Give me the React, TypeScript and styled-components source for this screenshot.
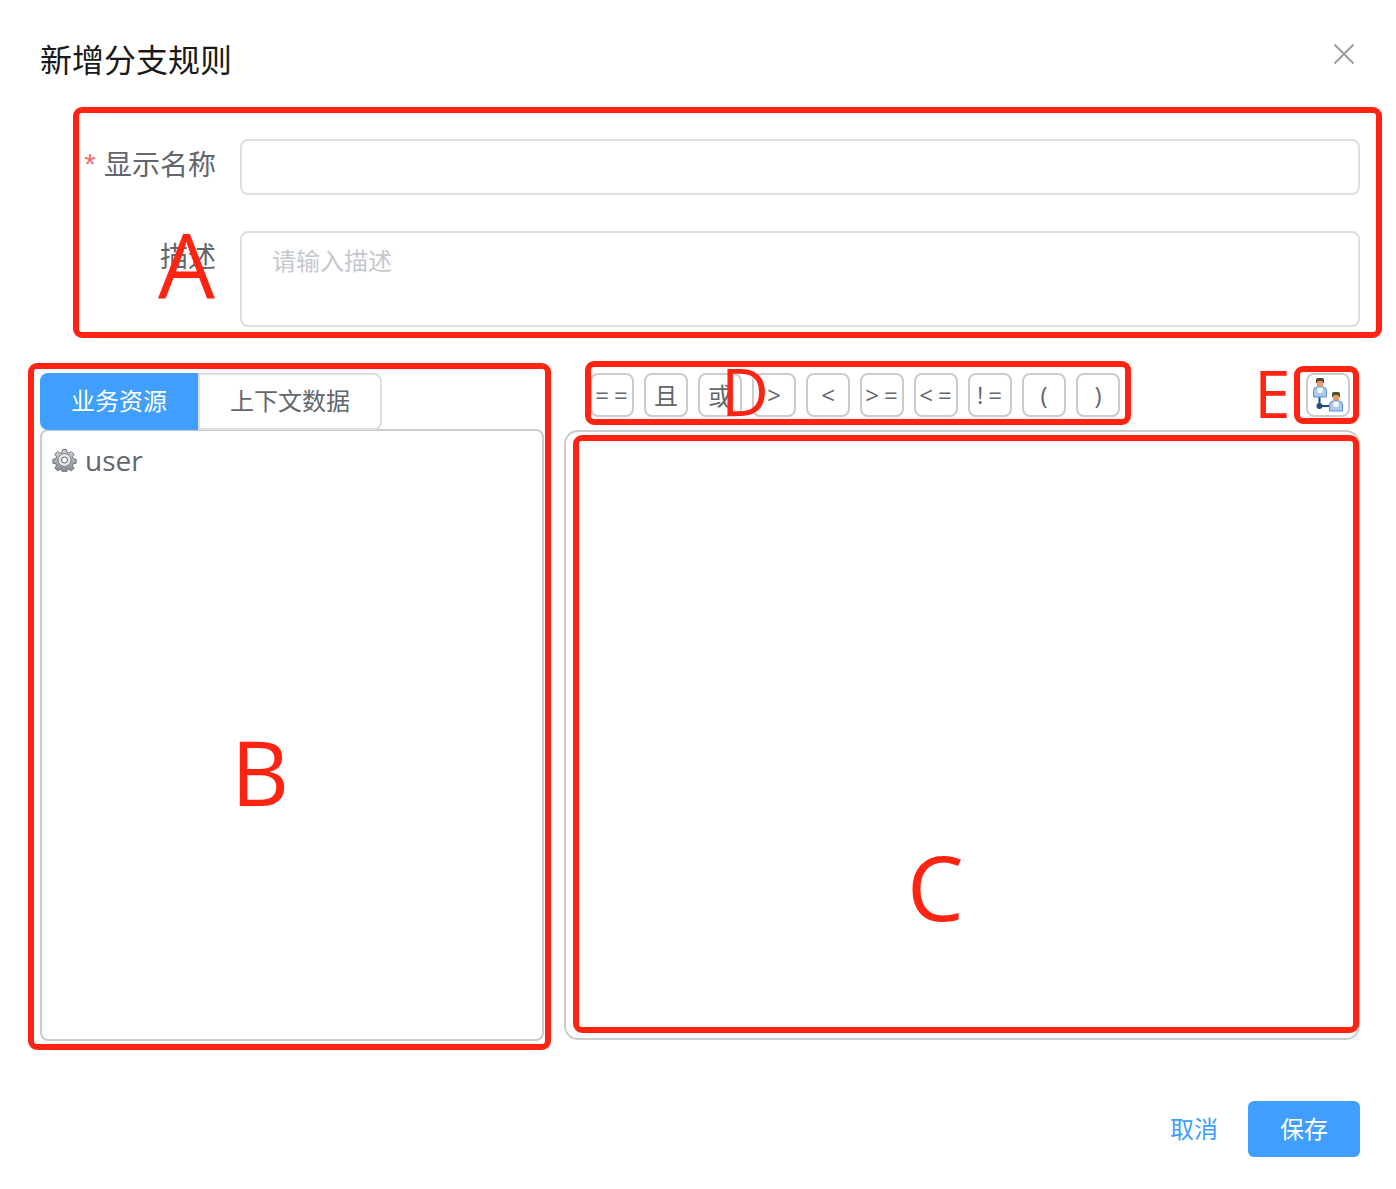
import React from 'react';
import styled, { createGlobalStyle } from 'styled-components';

const GlobalStyle = createGlobalStyle`
  html, body {
    margin: 0;
    padding: 0;
    background: #fff;
    font-family: "Open Sans", "Noto Sans CJK SC", sans-serif;
  }
  * { box-sizing: border-box; }
`;

const Modal = styled.div`
  position: relative;
  width: 1396px;
  height: 1189px;
  padding: 0 36px 0 40px;
  overflow: hidden;
  background: #fff;
`;

const Header = styled.header`
  display: flex;
  align-items: center;
  justify-content: space-between;
  height: 107px;
  padding: 9px 5px 0 0;
`;

const Title = styled.h1`
  margin: 0;
  font-size: 32px;
  font-weight: 400;
  line-height: 40px;
  color: #1a1a1a;
  font-family: "Noto Sans CJK SC", sans-serif;
`;

const CloseButton = styled.button`
  display: flex;
  padding: 0;
  margin-top: -8px;
  border: none;
  background: none;
  color: #999da6;
`;

const Form = styled.form`
  display: flex;
  flex-direction: column;
  gap: 36px;
  margin-top: 32px;
`;

const Row = styled.div`
  display: flex;
  align-items: flex-start;
`;

const Label = styled.label<{ $required?: boolean }>`
  width: 176px;
  padding-top: 4px;
  text-align: right;
  font-size: 28px;
  line-height: 40px;
  color: #62666d;
  font-family: "Noto Sans CJK SC", sans-serif;

  &::before {
    content: ${({ $required }) => ($required ? '"*"' : 'none')};
    margin-right: 8px;
    font-size: 30px;
    line-height: 30px;
    color: #f56c6c;
    vertical-align: 1px;
    font-family: "Liberation Sans", sans-serif;
  }
`;

const Input = styled.div`
  flex: 1;
  margin-left: 24px;
  height: 56px;
  border: 2px solid #dcdee2;
  border-radius: 8px;
  background: #fff;
`;

const TextArea = styled(Input)`
  height: 96px;
  padding: 9px 30px;
  font-size: 24px;
  line-height: 36px;
  color: #c5c8ce;
  font-family: "Noto Sans CJK SC", sans-serif;
`;

const Body = styled.div`
  display: flex;
  align-items: flex-start;
  gap: 21px;
  margin-top: 46px;
`;

const LeftColumn = styled.section`
  width: 504px;
`;

const Tabs = styled.div`
  display: flex;
  height: 57px;
`;

const Tab = styled.div<{ $active?: boolean }>`
  display: flex;
  align-items: center;
  justify-content: center;
  padding-bottom: 4px;
  font-size: 24px;
  font-family: "Noto Sans CJK SC", sans-serif;
  width: ${({ $active }) => ($active ? '158px' : '184px')};
  background: ${({ $active }) => ($active ? '#409eff' : '#fff')};
  color: ${({ $active }) => ($active ? '#fff' : '#62666d')};
  border: ${({ $active }) => ($active ? 'none' : '2px solid #dcdee2')};
  border-radius: ${({ $active }) => ($active ? '8px 0 0 8px' : '0 8px 8px 0')};
`;

const TreePanel = styled.div`
  height: 612px;
  margin-top: -1px;
  padding: 9px 10px;
  border: 2px solid #ccc;
  border-radius: 8px;
`;

const TreeNode = styled.div`
  display: flex;
  align-items: center;
  gap: 8px;
  height: 40px;
  font-size: 28px;
  color: #62666d;
`;

const RightColumn = styled.section`
  flex: 1;
`;

const Toolbar = styled.div`
  display: flex;
  gap: 10px;
  padding: 0 10px 0 25px;
`;

const OpButton = styled.button<{ $wide?: boolean }>`
  display: flex;
  align-items: center;
  justify-content: center;
  flex: none;
  width: 44px;
  height: 44px;
  padding: 0 0 1px ${({ $wide }) => ($wide ? '4px' : '0')};
  border: 2px solid #ccc;
  border-radius: 8px;
  background: #fff;
  color: #62666d;
  font-size: 24px;
  letter-spacing: ${({ $wide }) => ($wide ? '5px' : '0')};
  font-family: "Open Sans", "Noto Sans CJK SC", sans-serif;
`;

const RelationButton = styled(OpButton)`
  margin-left: auto;
`;

const ExpressionPanel = styled.div`
  height: 610px;
  margin-top: 13px;
  margin-left: -1px;
  border: 2px solid #ccc;
  border-radius: 14px;
`;

const Footer = styled.footer`
  display: flex;
  justify-content: flex-end;
  align-items: center;
  gap: 30px;
  margin-top: 60px;
`;

const TextButton = styled.button`
  padding: 0 0 4px;
  border: none;
  background: none;
  color: #409eff;
  font-size: 24px;
  font-family: "Noto Sans CJK SC", sans-serif;
`;

const PrimaryButton = styled.button`
  width: 112px;
  height: 56px;
  padding: 0 0 4px;
  border: none;
  border-radius: 6px;
  background: #409eff;
  color: #fff;
  font-size: 24px;
  font-family: "Noto Sans CJK SC", sans-serif;
`;

// red review marks that were drawn over the screenshot
const Mark = styled.div<{ $x: number; $y: number; $w: number; $h: number }>`
  position: absolute;
  left: ${({ $x }) => $x}px;
  top: ${({ $y }) => $y}px;
  width: ${({ $w }) => $w}px;
  height: ${({ $h }) => $h}px;
  border: 6px solid #ff2312;
  border-radius: 9px;
  pointer-events: none;
`;

const MarkLetter = styled.span<{ $x: number; $y: number; $small?: boolean }>`
  position: absolute;
  left: ${({ $x }) => $x}px;
  top: ${({ $y }) => $y}px;
  font-size: ${({ $small }) => ($small ? '66px' : '90px')};
  line-height: ${({ $small }) => ($small ? '66px' : '90px')};
  color: #ff2312;
  font-family: "Open Sans", sans-serif;
  pointer-events: none;
`;

const CloseIcon = () => (
  <svg width="22" height="22" viewBox="0 0 22 22" fill="none" stroke="currentColor" strokeWidth="2">
    <path d="M1.5 1.5l19 19M20.500 1.500l-19 19" />
  </svg>
);

const GearIcon = () => (
  <svg width="25" height="24" viewBox="0 0 24 24">
    <defs>
      <linearGradient id="gear" x1="0" y1="0" x2="0" y2="1">
        <stop offset="0" stopColor="#cfd4d9" />
        <stop offset="1" stopColor="#7f868c" />
      </linearGradient>
    </defs>
    <path
      fill="url(#gear)"
      stroke="#666c72"
      strokeWidth="1"
      d="M10 1h4l.6 3 2.100.9 2.600-1.700 2.800 2.800-1.700 2.600.9 2.100 3 .6v4l-3 .6-.9 2.100 1.700 2.600-2.800 2.800-2.600-1.700-2.100.9-.6 3h-4l-.6-3-2.100-.9-2.600 1.700-2.800-2.800 1.700-2.600-.9-2.100-3-.6v-4l3-.6.9-2.100-1.700-2.600 2.800-2.800 2.600 1.700 2.100-.9z"
      transform="translate(.6 .6) scale(.95)"
    />
    <circle cx="12" cy="12" r="6.500" fill="#e4e7ea" stroke="#7b8187" />
    <circle cx="12" cy="12" r="3" fill="#fff" stroke="#5e646a" />
  </svg>
);

const PersonGlyph = ({ x, y }: { x: number; y: number }) => (
  <g transform={`translate(${x} ${y})`}>
    <path d="M3 5V2q0-2 2-2h4q2 0 2 2v3z" fill="#4d4c30" />
    <rect x="4" y="3" width="6" height="6" rx="1.500" fill="#e89a64" />
    <path d="M.5 19v-6q0-4 3.500-4h6q3.500 0 3.500 4v6z" fill="#a9c8ea" stroke="#5f93cf" />
    <path d="M4.500 9.500h5v5.500h-5z" fill="#f4f8fc" />
  </g>
);

const RelationIcon = () => (
  <svg width="32" height="34" viewBox="0 0 32 34">
    <path d="M7.500 18v10h10" fill="none" stroke="#1f4f86" strokeWidth="2" />
    <circle cx="7.500" cy="28" r="3" fill="#1f4f86" />
    <PersonGlyph x={1} y={0} />
    <PersonGlyph x={17} y={14} />
  </svg>
);

const ops = [
  { text: '==', wide: true },
  { text: '且' },
  { text: '或' },
  { text: '>' },
  { text: '<' },
  { text: '>=', wide: true },
  { text: '<=', wide: true },
  { text: '!=', wide: true },
  { text: '(' },
  { text: ')' },
];

const App = () => (
  <Modal>
    <GlobalStyle />
    <Header>
      <Title>新增分支规则</Title>
      <CloseButton>
        <CloseIcon />
      </CloseButton>
    </Header>

    <Form>
      <Row>
        <Label $required>显示名称</Label>
        <Input />
      </Row>
      <Row>
        <Label>描述</Label>
        <TextArea>请输入描述</TextArea>
      </Row>
    </Form>

    <Body>
      <LeftColumn>
        <Tabs>
          <Tab $active>业务资源</Tab>
          <Tab>上下文数据</Tab>
        </Tabs>
        <TreePanel>
          <TreeNode>
            <GearIcon />
            user
          </TreeNode>
        </TreePanel>
      </LeftColumn>

      <RightColumn>
        <Toolbar>
          {ops.map((op) => (
            <OpButton key={op.text} $wide={op.wide}>
              {op.text}
            </OpButton>
          ))}
          <RelationButton>
            <RelationIcon />
          </RelationButton>
        </Toolbar>
        <ExpressionPanel />
      </RightColumn>
    </Body>

    <Footer>
      <TextButton>取消</TextButton>
      <PrimaryButton>保存</PrimaryButton>
    </Footer>

    <Mark $x={73} $y={107} $w={1309} $h={231} />
    <Mark $x={28} $y={363} $w={523} $h={687} />
    <Mark $x={573} $y={435} $w={786} $h={598} />
    <Mark $x={585} $y={361} $w={546} $h={64} />
    <Mark $x={1294} $y={366} $w={65} $h={58} />
    <MarkLetter $x={158} $y={218}>A</MarkLetter>
    <MarkLetter $x={231} $y={726}>B</MarkLetter>
    <MarkLetter $x={907} $y={841}>C</MarkLetter>
    <MarkLetter $x={721} $y={357} $small>D</MarkLetter>
    <MarkLetter $x={1254} $y={359} $small>E</MarkLetter>
  </Modal>
);

export default App;
